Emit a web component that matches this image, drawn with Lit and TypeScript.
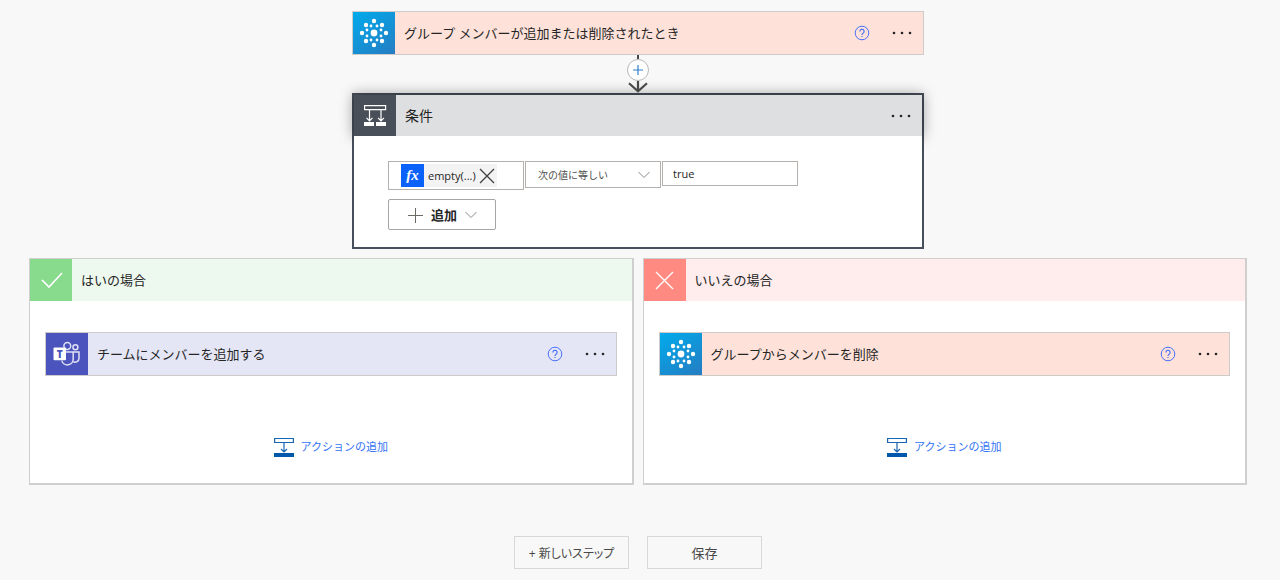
import { LitElement, html, svg, css } from "lit";
import { customElement, property } from "lit/decorators.js";

const groupIcon = () => {
  const outer = [[0, -12], [8, -8], [12, 0], [8, 8], [0, 12], [-8, 8], [-12, 0], [-8, -8]];
  const inner = [[3, -7], [7, -3], [7, 3], [3, 7], [-3, 7], [-7, 3], [-7, -3], [-3, -7]];
  return html`<svg viewBox="0 0 42 42" width="42" height="42" aria-hidden="true" fill="#fff">
    <circle cx="21" cy="21" r="3.4"></circle>
    ${outer.map(([x, y]) => svg`<circle cx=${21 + x} cy=${21 + y} r="2.2"></circle>`)}
    ${inner.map(([x, y]) => svg`<circle cx=${21 + x} cy=${21 + y} r="1.4"></circle>`)}
  </svg>`;
};

const teamsIcon = () => html`<svg viewBox="0 0 42 42" width="42" height="42" aria-hidden="true">
  <g fill="none" stroke="#dfe1f6" stroke-width="1.5">
    <circle cx="21.3" cy="13" r="3.4"></circle>
    <circle cx="29.4" cy="14.2" r="2.5"></circle>
    <path d="M20 19h7.2v7a5.8 5.8 0 0 1-11.4 1.6"></path>
    <path d="M27.2 19h5.8v6.2a3.9 3.9 0 0 1-5.9 3.4"></path>
  </g>
  <rect x="7.5" y="14.5" width="12.5" height="12.8" rx="1" fill="#fff"></rect>
  <text x="13.8" y="24.7" text-anchor="middle" font-family="Open Sans, sans-serif" font-size="10" font-weight="800" fill="#4b53bc">T</text>
</svg>`;

const conditionIcon = () => html`<svg viewBox="0 0 42 42" width="42" height="42" aria-hidden="true">
  <g fill="none" stroke="#fff" stroke-width="1.2">
    <path d="M10.600 10.600h21v4h-21z"></path>
    <path d="M15.500 14.600V26M12.500 22.800l3 3 3-3M27 14.600V26M24 22.800l3 3 3-3"></path>
  </g>
  <path fill="#fff" d="M10 27h10v4H10zM22 27h10v4H22z"></path>
</svg>`;

const checkIcon = () => html`<svg viewBox="0 0 42 42" width="42" height="42" aria-hidden="true">
  <path d="M12 21l7 7L32 14" fill="none" stroke="#fff" stroke-width="1.7"></path>
</svg>`;

const crossIcon = () => html`<svg viewBox="0 0 42 42" width="42" height="42" aria-hidden="true">
  <path d="M12 13l17 17M29 13L12 30" fill="none" stroke="#fff" stroke-width="1.3"></path>
</svg>`;

const chevron = () => html`<svg class="chevron" viewBox="0 0 12 8" width="12" height="8" aria-hidden="true">
  <path d="M.5 1L6 6.500 11.500 1" fill="none" stroke="#8a8a8a"></path>
</svg>`;

const base = css`
  *, *::before, *::after { box-sizing: border-box; }
  svg { display: block; flex: none; }
  button, input, select { font: inherit; color: inherit; margin: 0; border-radius: 0; }
  button { padding: 0; border: 0; background: none; cursor: pointer; }
`;

@customElement("more-button")
export class MoreButton extends LitElement {
  static styles = [base, css`
    :host { display: block; }
    button { display: block; }
  `];
  render() {
    return html`<button type="button" aria-label="メニュー">
      <svg viewBox="0 0 24 24" width="24" height="24" fill="#252525">
        <circle cx="4" cy="12" r="1.3"></circle><circle cx="12" cy="12" r="1.3"></circle><circle cx="20" cy="12" r="1.3"></circle>
      </svg>
    </button>`;
  }
}

@customElement("step-card")
export class StepCard extends LitElement {
  @property() label = "";
  @property() kind: "group" | "teams" = "group";

  static styles = [base, css`
    :host { display: block; width: 100%; max-width: 572px; }
    .card { display: flex; align-items: center; border: 1px solid #cfcbc9; }
    .group { background: #fee2d9; }
    .teams { background: #e4e6f5; }
    .icon { flex: none; }
    .group .icon { background: linear-gradient(145deg, #00abec, #267cc2); }
    .teams .icon { background: #4b53bc; }
    .title { flex: 1; min-width: 0; margin: 0; padding-left: 9px; font-size: 13px; line-height: 20px; font-weight: 400; }
    .help { margin-right: 20px; }
    more-button { margin-right: 9px; }
  `];

  render() {
    return html`<section class="card ${this.kind}">
      <div class="icon">${this.kind === "teams" ? teamsIcon() : groupIcon()}</div>
      <h2 class="title">${this.label}</h2>
      <button class="help" type="button" aria-label="ヘルプ">
        <svg viewBox="0 0 16 16" width="16" height="16" fill="none" stroke="#4a70fa">
          <circle cx="8" cy="8" r="6.800"></circle>
          <path d="M5.900 6.400a2.100 2.100 0 1 1 3.200 1.800c-.800.500-1.100.800-1.100 1.700" stroke-width="1.200"></path>
          <path d="M8 10.900v1.200" stroke-width="1.200"></path>
        </svg>
      </button>
      <more-button></more-button>
    </section>`;
  }
}

@customElement("branch-panel")
export class BranchPanel extends LitElement {
  @property() label = "";
  @property() kind: "yes" | "no" = "yes";

  static styles = [base, css`
    :host { display: block; flex: 1; min-width: 0; }
    .panel { background: #fff; border: 1px solid #cfcfcf; border-right-width: 2px; border-bottom-width: 2px; }
    .head { display: flex; align-items: center; }
    .yes .head { background: #edf8ee; }
    .no .head { background: #ffecec; }
    .yes .icon { background: #88da8d; }
    .no .icon { background: #ff8a82; }
    .title { margin: 0; padding-left: 9px; font-size: 13px; line-height: 20px; font-weight: 400; }
    .body { display: flex; flex-direction: column; align-items: center; gap: 61px; padding: 31px 15px 26px; }
    .add { display: flex; align-items: center; gap: 7px; color: #3373f5; font-size: 11px; line-height: 20px; }
  `];

  render() {
    return html`<section class="panel ${this.kind}">
      <header class="head">
        <div class="icon">${this.kind === "yes" ? checkIcon() : crossIcon()}</div>
        <h2 class="title">${this.label}</h2>
      </header>
      <div class="body">
        <slot></slot>
        <button class="add" type="button">
          <svg viewBox="0 0 20 20" width="20" height="20" aria-hidden="true">
            <path d="M.600 1.500h18.800v4H.600zM10 5.500V15M7 12l3 3 3-3" fill="none" stroke="#1866b4" stroke-width="1.200"></path>
            <path d="M0 16h20v4H0z" fill="#0058ad"></path>
          </svg>
          アクションの追加
        </button>
      </div>
    </section>`;
  }
}

@customElement("condition-card")
export class ConditionCard extends LitElement {
  static styles = [base, css`
    :host { display: block; width: 100%; max-width: 572px; }
    .card { border: 2px solid #484f5c; background: #fff; }
    .head { display: flex; align-items: center; height: 41px; background: #dddfe0; box-shadow: 0 0 14px 1px rgba(0, 0, 0, 0.36); }
    .icon { background: #484f58; height: 41px; overflow: hidden; }
    .title { flex: 1; margin: 0; padding-left: 9px; font-size: 14px; line-height: 20px; font-weight: 400; }
    more-button { margin-right: 9px; }
    .body { display: flex; flex-direction: column; align-items: flex-start; gap: 9px; padding: 25px 34px 17px; background: #fff; }
    .fields { display: grid; grid-template-columns: repeat(3, minmax(0, 1fr)); align-items: start; gap: 1px; width: 100%; max-width: 410px; }
    .operand, .operator, .value { width: 100%; border: 1px solid #b3b0ad; background: #fff; }
    .operand { display: flex; padding: 2px 0 2px 12px; height: 29px; }
    .token { display: flex; align-items: center; background: #f3f3f3; font-size: 11px; line-height: 16px; padding-right: 2px; }
    .fx { width: 23px; height: 23px; margin-right: 4px; background: #0a62fb; color: #fff; font: italic 700 15px/22px "Liberation Serif", serif; text-align: center; }
    .remove { margin-left: 3px; }
    .operator { display: grid; align-items: center; height: 27px; }
    .operator > * { grid-area: 1 / 1; }
    .operator select { appearance: none; width: 100%; height: 25px; border: 0; background: none; padding: 0 24px 0 12px; font-size: 10px; color: #505050; }
    .operator .chevron { justify-self: end; margin-right: 10px; pointer-events: none; }
    .value { height: 25px; padding: 0 10px; font-size: 11px; color: #252525; }
    .add { display: flex; align-items: center; justify-content: center; gap: 8px; width: 108px; height: 31px; border: 1px solid #a6a6a6; border-radius: 2px; background: #fff; font-size: 13px; font-weight: 700; }
  `];

  render() {
    return html`<section class="card">
      <header class="head">
        <div class="icon">${conditionIcon()}</div>
        <h2 class="title">条件</h2>
        <more-button></more-button>
      </header>
      <div class="body">
        <div class="fields">
          <div class="operand">
            <span class="token">
              <span class="fx">fx</span>empty(...)
              <button class="remove" type="button" aria-label="削除">
                <svg viewBox="0 0 16 16" width="16" height="16"><path d="M1 1l14 14M15 1L1 15" fill="none" stroke="#404040" stroke-width="1.300"></path></svg>
              </button>
            </span>
          </div>
          <div class="operator">
            <select aria-label="演算子"><option>次の値に等しい</option></select>
            ${chevron()}
          </div>
          <input class="value" type="text" aria-label="値" .value=${"true"} />
        </div>
        <button class="add" type="button">
          <svg viewBox="0 0 16 16" width="16" height="16" aria-hidden="true"><path d="M8.500 1v15M1 8.500h15" fill="none" stroke="#6b6963"></path></svg>
          追加
          ${chevron()}
        </button>
      </div>
    </section>`;
  }
}

@customElement("app-root")
export class AppRoot extends LitElement {
  static styles = [base, css`
    :host {
      display: block; min-height: 100vh; background: #f8f8f8; color: #252525;
      font-family: "Open Sans", "Noto Sans CJK JP", sans-serif;
    }
    .flow { display: flex; flex-direction: column; align-items: center; padding: 11px 33px 11px 29px; }
    .connector { position: relative; z-index: 1; display: flex; flex-direction: column; align-items: center; }
    .line { width: 2px; height: 4px; background: #484848; }
    .insert { display: grid; place-items: center; width: 22px; height: 22px; border: 1px solid #b8b8b8; border-radius: 50%; background: #fff; }
    .branches { display: flex; gap: 9px; width: 100%; margin-top: 9px; }
    .actions { display: flex; gap: 18px; margin-top: 51px; }
    .action { width: 115px; height: 33px; border: 1px solid #d8d8d8; background: #f8f8f8; font-size: 13px; color: #484848; white-space: nowrap; }
    .narrow { font-size: 12px; font-feature-settings: "palt"; }
  `];

  render() {
    return html`<main class="flow">
      <step-card kind="group" label="グループ メンバーが追加または削除されたとき"></step-card>
      <div class="connector">
        <span class="line"></span>
        <button class="insert" type="button" aria-label="新しいステップの挿入">
          <svg viewBox="0 0 12 12" width="12" height="12"><path d="M6 1v10M1 6h10" fill="none" stroke="#2f80d0" stroke-width="1.200"></path></svg>
        </button>
        <svg viewBox="0 0 20 12" width="20" height="12" aria-hidden="true">
          <path d="M10 0v10M1 2.200l9 8 9-8" fill="none" stroke="#484848" stroke-width="2.200"></path>
        </svg>
      </div>
      <condition-card></condition-card>
      <div class="branches">
        <branch-panel kind="yes" label="はいの場合">
          <step-card kind="teams" label="チームにメンバーを追加する"></step-card>
        </branch-panel>
        <branch-panel kind="no" label="いいえの場合">
          <step-card kind="group" label="グループからメンバーを削除"></step-card>
        </branch-panel>
      </div>
      <div class="actions">
        <button class="action narrow" type="button">+ 新しいステップ</button>
        <button class="action" type="button">保存</button>
      </div>
    </main>`;
  }
}
